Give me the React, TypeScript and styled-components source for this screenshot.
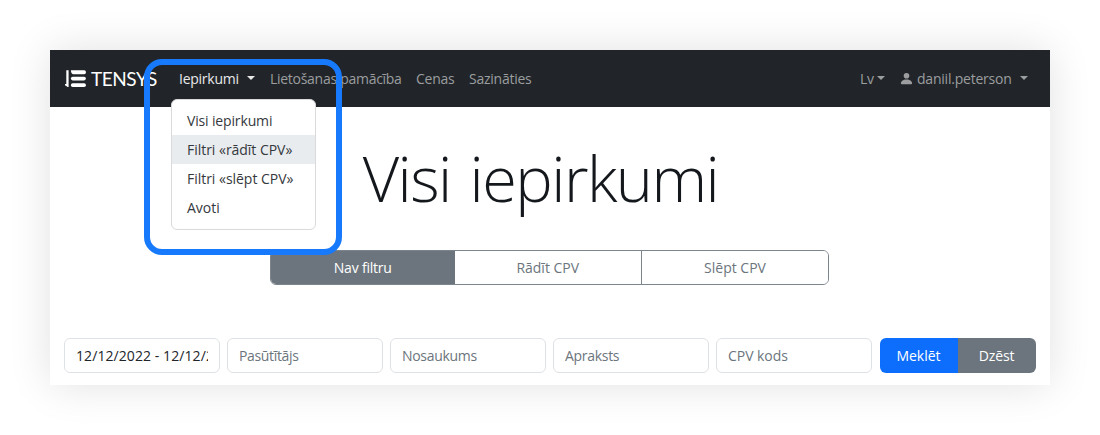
import React from 'react';
import styled, { createGlobalStyle } from 'styled-components';

const GlobalStyle = createGlobalStyle`
  * { box-sizing: border-box; }
  body {
    margin: 0;
    background: #fff;
    color: #212529;
    font-family: 'Open Sans', 'Noto Sans', sans-serif;
    font-size: 14px;
    line-height: 21px;
    overflow: hidden;
  }
`;

const Stage = styled.div`
  height: 435px;
  padding: 50px;
`;

const Page = styled.div`
  height: 335px;
  background: #fff;
  box-shadow: 0 0 40px rgba(0, 0, 0, 0.12);
`;

const Navbar = styled.header`
  display: flex;
  align-items: center;
  height: 57px;
  padding: 0 22px 0 15px;
  background: #212529;
`;

const Brand = styled.div`
  display: flex;
  align-items: center;
  gap: 5px;
  width: 114px;
  color: #fff;
  font-family: Lato, sans-serif;
  font-size: 19px;
  letter-spacing: -0.45px;
`;

const Label = styled.span<{ $spacing?: number }>`
  white-space: nowrap;
  letter-spacing: ${(p) => p.$spacing ?? -0.25}px;
`;

const NavItem = styled.div<{ $active?: boolean; $width: number; $gap?: number }>`
  position: relative;
  display: flex;
  align-items: center;
  flex: none;
  width: ${(p) => p.$width}px;
  margin-right: ${(p) => p.$gap ?? 0}px;
  color: ${(p) => (p.$active ? '#e9e9ea' : '#9b9d9f')};
`;

const Spacer = styled.div`
  flex: 1;
`;

const Caret = styled.span`
  margin: -2px 0 0 auto;
  border: 4.5px solid transparent;
  border-top-color: currentColor;
  border-bottom: 0;
`;

const UserIcon = styled.svg`
  flex: none;
  width: 15px;
  height: 15px;
  margin: 0 3px 0 0;
`;

const Menu = styled.div`
  position: absolute;
  top: 31px;
  left: -8px;
  z-index: 1;
  width: 145px;
  height: 131px;
  padding: 6px 0;
  border: 1px solid #d8dadb;
  border-radius: 6px;
  background: #fff;
  color: #35393d;
`;

const MenuItem = styled.div<{ $hover?: boolean }>`
  height: 29px;
  padding: 4px 15px;
  background: ${(p) => (p.$hover ? '#e9ecef' : 'transparent')};
`;

const FocusFrame = styled.div`
  position: absolute;
  top: -9px;
  left: -35px;
  z-index: 2;
  width: 197.5px;
  height: 196px;
  border: 6px solid #177afd;
  border-radius: 18px;
`;

const Title = styled.h1`
  margin: 29px 0 0;
  padding-right: 19px;
  height: 84px;
  line-height: 84px;
  text-align: center;
  font-size: 63px;
  font-weight: 300;
  letter-spacing: -1.55px;
  word-spacing: 4px;
  color: #14181c;
`;

const Segments = styled.div`
  display: grid;
  grid-template-columns: 183.5px 186.5px 187px;
  width: 559px;
  height: 35px;
  margin: 30px 0 0 220px;
  border: 1px solid #7d858c;
  border-radius: 6px;
  overflow: hidden;
`;

const Segment = styled.div<{ $active?: boolean }>`
  display: flex;
  align-items: center;
  justify-content: center;
  background: ${(p) => (p.$active ? '#6c757d' : '#fff')};
  color: ${(p) => (p.$active ? '#fff' : '#6c757d')};

  & + & + & {
    border-left: 1px solid #7d858c;
  }
`;

const Filters = styled.div`
  display: flex;
  gap: 7px;
  margin: 53px 14px 0;
`;

const Field = styled.div<{ $filled?: boolean }>`
  width: 156px;
  height: 35px;
  padding: 6px 11px;
  border: 1px solid #dee2e6;
  border-radius: 6px;
  color: ${(p) => (p.$filled ? '#212529' : '#6c757d')};
`;

const FieldText = styled.div`
  overflow: hidden;
  white-space: nowrap;
`;

const Actions = styled.div`
  display: flex;
  width: 156px;
  height: 35px;
  margin-left: 0.5px;
  border-radius: 6px;
  overflow: hidden;
`;

const Action = styled.div<{ $primary?: boolean }>`
  display: flex;
  align-items: center;
  justify-content: center;
  flex: 1;
  color: #fff;
  background: ${(p) => (p.$primary ? '#0d6efd' : '#6c757d')};
`;

const Logo = () => (
  <svg width="21" height="18" viewBox="0 0 21 18" fill="#fff">
    <path d="M1.3 0.2H3.6V17H2.7L-0.2 15.2L0.1 13.9H1.3z" />
    <path d="M5.9 0.2H19.1A1.9 2 0 0 1 19.1 4.2H8Q6 3.6 5.9 0.2z" />
    <rect x="5.9" y="6.8" width="15" height="3.6" rx="1.8" />
    <rect x="5.9" y="13.2" width="15" height="3.9" rx="1.8" />
  </svg>
);

export default function App() {
  return (
    <Stage>
      <GlobalStyle />
      <Page>
        <Navbar>
          <Brand>
            <Logo />
            <span>TENSYS</span>
          </Brand>
          <NavItem $active $width={76} $gap={15}>
            <Label>Iepirkumi</Label>
            <Caret />
            <Menu>
              <MenuItem><Label $spacing={-0.15}>Visi iepirkumi</Label></MenuItem>
              <MenuItem $hover><Label $spacing={-0.03}>Filtri «rādīt CPV»</Label></MenuItem>
              <MenuItem><Label $spacing={-0.03}>Filtri «slēpt CPV»</Label></MenuItem>
              <MenuItem><Label $spacing={0}>Avoti</Label></MenuItem>
            </Menu>
            <FocusFrame />
          </NavItem>
          <NavItem $width={146}><Label $spacing={-0.28}>Lietošanas pamācība</Label></NavItem>
          <NavItem $width={53}><Label>Cenas</Label></NavItem>
          <NavItem $width={64}><Label>Sazināties</Label></NavItem>
          <Spacer />
          <NavItem $width={25} $gap={14}>
            <Label>Lv</Label>
            <Caret />
          </NavItem>
          <NavItem $width={129}>
            <UserIcon viewBox="0 0 16 16" fill="currentColor">
              <path d="M3 14s-1 0-1-1 1-4 6-4 6 3 6 4-1 1-1 1zm5-6a3 3 0 1 0 0-6 3 3 0 0 0 0 6" />
            </UserIcon>
            <Label $spacing={-0.22}>daniil.peterson</Label>
            <Caret />
          </NavItem>
        </Navbar>
        <Title>Visi iepirkumi</Title>
        <Segments>
          <Segment $active><Label $spacing={-0.2}>Nav filtru</Label></Segment>
          <Segment><Label $spacing={0}>Rādīt CPV</Label></Segment>
          <Segment><Label $spacing={0}>Slēpt CPV</Label></Segment>
        </Segments>
        <Filters>
          <Field $filled><FieldText><Label $spacing={0.08}>12/12/2022 - 12/12/2022</Label></FieldText></Field>
          <Field><Label $spacing={-0.35}>Pasūtītājs</Label></Field>
          <Field><Label $spacing={-0.3}>Nosaukums</Label></Field>
          <Field><Label $spacing={-0.3}>Apraksts</Label></Field>
          <Field><Label $spacing={-0.05}>CPV kods</Label></Field>
          <Actions>
            <Action $primary><Label $spacing={0}>Meklēt</Label></Action>
            <Action><Label $spacing={-0.15}>Dzēst</Label></Action>
          </Actions>
        </Filters>
      </Page>
    </Stage>
  );
}
